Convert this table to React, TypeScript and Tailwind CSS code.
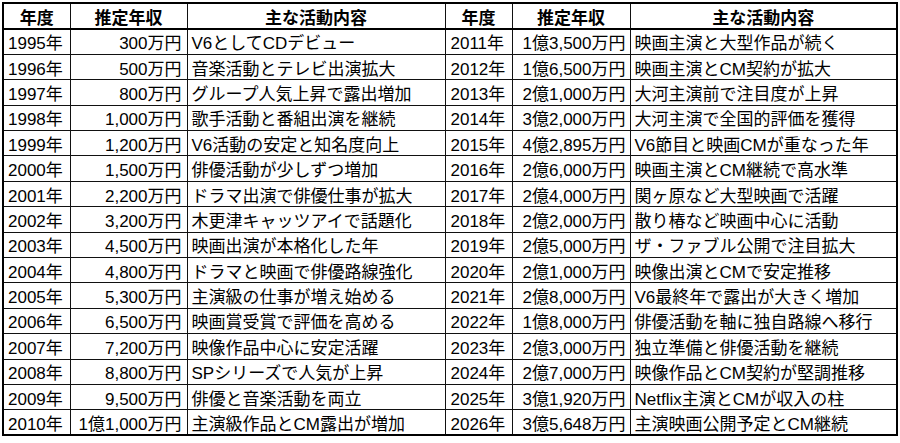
import React from "react";

const left: [string, string, string][] = [
  ["1995年", "300万円", "V6としてCDデビュー"],
  ["1996年", "500万円", "音楽活動とテレビ出演拡大"],
  ["1997年", "800万円", "グループ人気上昇で露出増加"],
  ["1998年", "1,000万円", "歌手活動と番組出演を継続"],
  ["1999年", "1,200万円", "V6活動の安定と知名度向上"],
  ["2000年", "1,500万円", "俳優活動が少しずつ増加"],
  ["2001年", "2,200万円", "ドラマ出演で俳優仕事が拡大"],
  ["2002年", "3,200万円", "木更津キャッツアイで話題化"],
  ["2003年", "4,500万円", "映画出演が本格化した年"],
  ["2004年", "4,800万円", "ドラマと映画で俳優路線強化"],
  ["2005年", "5,300万円", "主演級の仕事が増え始める"],
  ["2006年", "6,500万円", "映画賞受賞で評価を高める"],
  ["2007年", "7,200万円", "映像作品中心に安定活躍"],
  ["2008年", "8,800万円", "SPシリーズで人気が上昇"],
  ["2009年", "9,500万円", "俳優と音楽活動を両立"],
  ["2010年", "1億1,000万円", "主演級作品とCM露出が増加"],
];

const right: [string, string, string][] = [
  ["2011年", "1億3,500万円", "映画主演と大型作品が続く"],
  ["2012年", "1億6,500万円", "映画主演とCM契約が拡大"],
  ["2013年", "2億1,000万円", "大河主演前で注目度が上昇"],
  ["2014年", "3億2,000万円", "大河主演で全国的評価を獲得"],
  ["2015年", "4億2,895万円", "V6節目と映画CMが重なった年"],
  ["2016年", "2億6,000万円", "映画主演とCM継続で高水準"],
  ["2017年", "2億4,000万円", "関ヶ原など大型映画で活躍"],
  ["2018年", "2億2,000万円", "散り椿など映画中心に活動"],
  ["2019年", "2億5,000万円", "ザ・ファブル公開で注目拡大"],
  ["2020年", "2億1,000万円", "映像出演とCMで安定推移"],
  ["2021年", "2億8,000万円", "V6最終年で露出が大きく増加"],
  ["2022年", "1億8,000万円", "俳優活動を軸に独自路線へ移行"],
  ["2023年", "2億3,000万円", "独立準備と俳優活動を継続"],
  ["2024年", "2億7,000万円", "映像作品とCM契約が堅調推移"],
  ["2025年", "3億1,920万円", "Netflix主演とCMが収入の柱"],
  ["2026年", "3億5,648万円", "主演映画公開予定とCM継続"],
];

const font = {
  fontFamily:
    '"Liberation Sans", Arial, "Noto Sans CJK JP", sans-serif',
};

const th =
  "border border-[#111] border-b-2 border-b-black font-bold text-center pt-[4px] whitespace-nowrap";
const td = "border border-[#111] pt-[4px] whitespace-nowrap";

export default function App() {
  return (
    <div className="w-[900px] h-[443px] bg-white pt-[2px] pl-[2px]" style={font}>
      <table className="table-fixed border-collapse border-2 border-black text-[17px] leading-none text-black">
        <colgroup>
          <col className="w-[67px]" />
          <col className="w-[117px]" />
          <col className="w-[258px]" />
          <col className="w-[67px]" />
          <col className="w-[118px]" />
          <col className="w-[267px]" />
        </colgroup>
        <thead>
          <tr className="h-[26px]">
            <th className={th}>年度</th>
            <th className={th}>推定年収</th>
            <th className={th}>主な活動内容</th>
            <th className={th}>年度</th>
            <th className={th}>推定年収</th>
            <th className={th}>主な活動内容</th>
          </tr>
        </thead>
        <tbody>
          {left.map((l, i) => {
            const r = right[i];
            return (
              <tr key={l[0]} className="h-[25.4px]">
                <td className={`${td} pl-[4px]`}>{l[0]}</td>
                <td className={`${td} pr-[5px] text-right`}>{l[1]}</td>
                <td className={`${td} pl-[4px]`}>{l[2]}</td>
                <td className={`${td} pl-[5px]`}>{r[0]}</td>
                <td className={`${td} pr-[4px] text-right`}>{r[1]}</td>
                <td className={`${td} pl-[4px]`}>{r[2]}</td>
              </tr>
            );
          })}
        </tbody>
      </table>
    </div>
  );
}
